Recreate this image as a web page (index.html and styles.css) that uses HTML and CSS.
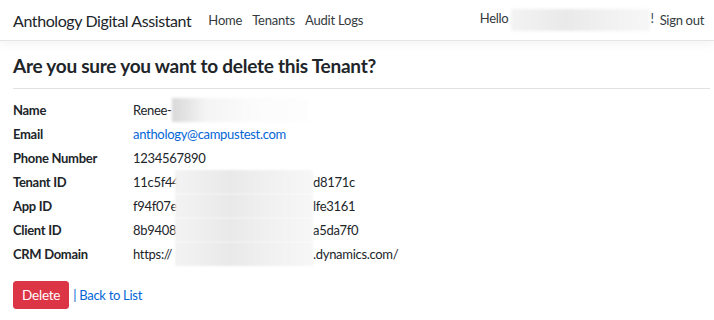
FILE: index.html
```html
<!DOCTYPE html>
<html lang="en">
<head>
  <meta charset="UTF-8">
  <meta name="viewport" content="width=device-width, initial-scale=1.0">
  <title>Delete - Anthology Digital Assistant</title>
  <link rel="stylesheet" href="styles.css">
</head>
<body>

  <header class="navbar">
    <a class="brand" href="#">Anthology Digital Assistant</a>
    <nav class="nav-links">
      <a href="#">Home</a>
      <a href="#">Tenants</a>
      <a href="#">Audit Logs</a>
    </nav>
    <div class="nav-user">
      <span>Hello <span class="blur blur-email"></span>!</span>
      <a href="#">Sign out</a>
    </div>
  </header>

  <main class="container">
    <h4 class="title">Are you sure you want to delete this Tenant?</h4>
    <hr>

    <dl class="details">
      <dt>Name</dt>
      <dd>Renee-<span class="blur blur-name"></span></dd>

      <dt>Email</dt>
      <dd><a href="#">anthology@campustest.com</a></dd>

      <dt>Phone Number</dt>
      <dd>1234567890</dd>

      <dt>Tenant ID</dt>
      <dd><span class="lead">11c5f44</span><span class="blur blur-id"></span>d8171c</dd>

      <dt>App ID</dt>
      <dd><span class="lead">f94f07e</span><span class="blur blur-id"></span>lfe3161</dd>

      <dt>Client ID</dt>
      <dd><span class="lead">8b9408</span><span class="blur blur-id"></span>a5da7f0</dd>

      <dt>CRM Domain</dt>
      <dd><span class="lead">https://</span><span class="blur blur-id"></span>.dynamics.com/</dd>
    </dl>

    <form class="actions">
      <button type="button" class="btn-danger">Delete</button>
      <span class="sep">|</span>
      <a href="#">Back to List</a>
    </form>
  </main>

</body>
</html>
```

FILE: styles.css
```css
* {
  box-sizing: border-box;
  margin: 0;
  padding: 0;
}

body {
  font-family: "Segoe UI", Lato, "Noto Sans", sans-serif;
  font-size: 13px;
  letter-spacing: -0.3px;
  color: #212529;
  background-color: #fff;
}

a {
  color: #0366d6;
  text-decoration: none;
}

/* navbar */

.navbar {
  height: 41px;
  display: flex;
  align-items: center;
  padding: 0 10px 0 13px;
  border-bottom: 1px solid #e5e5e5;
  box-shadow: 0 3px 10px rgba(0, 0, 0, 0.05);
}

.brand {
  font-size: 16px;
  letter-spacing: -0.4px;
  color: #212529;
  margin-right: 12px;
}

.nav-links {
  display: flex;
}

.nav-links a {
  color: #343a40;
  padding: 0 5px;
  letter-spacing: -0.2px;
}

.nav-user {
  margin-left: auto;
  display: flex;
  align-items: center;
  gap: 6px;
  color: #343a40;
}

.nav-user a {
  color: #343a40;
}

/* blurred placeholders */

.blur {
  display: inline-block;
  vertical-align: middle;
  background: linear-gradient(90deg, #f3f3f3, #e9e9e9 40%, #f1f1f1 70%, #f7f7f7);
  filter: blur(1.5px);
}

.blur-email {
  width: 139px;
  height: 22px;
}

.blur-name {
  width: 136px;
  height: 24px;
  background: linear-gradient(90deg, #d8d8d8, #f4f4f4 25%, #fbfbfb 60%, #fdfdfd);
}

.blur-id {
  width: 138px;
  height: 24px;
  filter: blur(1px);
}

/* content */

.container {
  padding: 0 4px 0 13px;
}

.title {
  font-size: 19px;
  font-weight: 700;
  letter-spacing: -0.25px;
  line-height: 24px;
  margin-top: 13px;
  margin-bottom: 10px;
}

hr {
  border: none;
  border-top: 1px solid #e2e2e2;
  margin-bottom: 9px;
}

.details {
  display: grid;
  grid-template-columns: 120px 1fr;
  grid-auto-rows: 24px;
  align-items: center;
}

dt {
  font-weight: 700;
}

dd {
  display: flex;
  align-items: center;
  white-space: nowrap;
}

.lead {
  width: 42px;
}

.actions {
  margin-top: 15px;
  display: flex;
  align-items: center;
}

.btn-danger {
  font-family: inherit;
  font-size: 13.5px;
  letter-spacing: -0.2px;
  height: 28px;
  padding: 0 8px;
  color: #fff;
  background-color: #dc3545;
  border: 1px solid #dc3545;
  border-radius: 3px;
  cursor: pointer;
}

.sep {
  color: #0366d6;
  margin: 0 3px 0 4px;
}
```
